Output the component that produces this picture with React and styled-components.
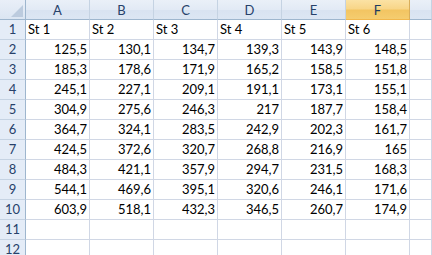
import styled, { createGlobalStyle } from 'styled-components';

const GlobalStyle = createGlobalStyle`
  html, body {
    margin: 0;
    padding: 0;
    background: #ffffff;
    overflow: hidden;
  }
`;

const COLS = ['A', 'B', 'C', 'D', 'E', 'F', ''];
const ACTIVE_COL = 'F';

const data = [
  ['St 1', 'St 2', 'St 3', 'St 4', 'St 5', 'St 6'],
  ['125,5', '130,1', '134,7', '139,3', '143,9', '148,5'],
  ['185,3', '178,6', '171,9', '165,2', '158,5', '151,8'],
  ['245,1', '227,1', '209,1', '191,1', '173,1', '155,1'],
  ['304,9', '275,6', '246,3', '217', '187,7', '158,4'],
  ['364,7', '324,1', '283,5', '242,9', '202,3', '161,7'],
  ['424,5', '372,6', '320,7', '268,8', '216,9', '165'],
  ['484,3', '421,1', '357,9', '294,7', '231,5', '168,3'],
  ['544,1', '469,6', '395,1', '320,6', '246,1', '171,6'],
  ['603,9', '518,1', '432,3', '346,5', '260,7', '174,9'],
  [],
  [],
];

const Sheet = styled.div`
  width: 432px;
  height: 255px;
  overflow: hidden;
  display: grid;
  grid-template-columns: 26px repeat(6, 64px) 1fr;
  grid-auto-rows: 20px;
  font-family: Lato, "Liberation Sans", sans-serif;
  font-size: 13px;
  color: #000;
`;

const Corner = styled.div`
  position: relative;
  box-sizing: border-box;
  background: linear-gradient(#e9eff8, #dbe5f2);
  border-right: 1px solid #9eb6ce;
  border-bottom: 1px solid #9eb6ce;

  &::after {
    content: '';
    position: absolute;
    right: 2px;
    bottom: 2px;
    width: 0;
    height: 0;
    border-left: 12px solid transparent;
    border-bottom: 12px solid #bccbde;
  }
`;

const ColHeader = styled.div`
  box-sizing: border-box;
  display: flex;
  align-items: center;
  justify-content: center;
  padding-top: 1px;
  color: ${(p) => (p.$active ? '#1f3b5e' : '#27416a')};
  background: ${(p) =>
    p.$active
      ? 'linear-gradient(#fbe2a4 0%, #f8d689 45%, #f3c562 55%, #f5cd70 100%)'
      : 'linear-gradient(#eaf0f8 0%, #e2eaf5 50%, #d9e3f1 55%, #dce6f3 100%)'};
  border-right: 1px solid ${(p) => (p.$active ? '#d9ae5a' : '#c5d3e3')};
  border-bottom: 1px solid ${(p) => (p.$active ? '#f2b74c' : '#9eb6ce')};
`;

const RowHeader = styled.div`
  box-sizing: border-box;
  display: flex;
  align-items: flex-end;
  justify-content: center;
  padding-bottom: 2px;
  color: #27416a;
  background: #e4ecf7;
  border-right: 1px solid #9eb6ce;
  border-bottom: 1px solid #c5d3e3;
`;

const Cell = styled.div`
  box-sizing: border-box;
  display: flex;
  align-items: flex-end;
  justify-content: ${(p) => (p.$num ? 'flex-end' : 'flex-start')};
  padding: 0 2px 2px 2px;
  white-space: nowrap;
  overflow: hidden;
  border-right: 1px solid #d0d7e5;
  border-bottom: 1px solid #d0d7e5;
`;

export default function App() {
  return (
    <>
      <GlobalStyle />
      <Sheet>
        <Corner />
        {COLS.map((c, i) => (
          <ColHeader key={i} $active={c === ACTIVE_COL}>
            {c}
          </ColHeader>
        ))}
        {data.map((row, r) => (
          <Row key={r} num={r + 1} values={row} />
        ))}
      </Sheet>
    </>
  );
}

function Row({ num, values }) {
  return (
    <>
      <RowHeader>{num}</RowHeader>
      {COLS.map((_, i) => {
        const v = values[i] ?? '';
        const isNum = /^[\d,]+$/.test(v);
        return (
          <Cell key={i} $num={isNum}>
            {v}
          </Cell>
        );
      })}
    </>
  );
}
